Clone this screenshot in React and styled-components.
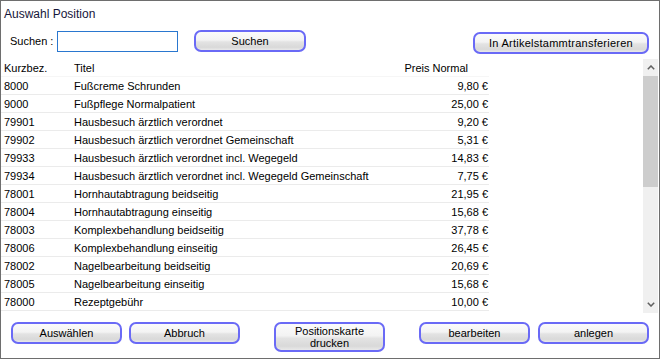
import React from "react";
import styled, { createGlobalStyle } from "styled-components";

const GlobalStyle = createGlobalStyle`
  html, body { margin: 0; padding: 0; background: #fff; }
  body { font-family: "Liberation Sans", Arial, sans-serif; }
`;

const Window = styled.div`
  width: 660px;
  height: 359px;
  box-sizing: border-box;
  border: 1px solid #6e6e6e;
  background: #fff;
  display: flex;
  flex-direction: column;
  font-family: "Liberation Sans", Arial, sans-serif;
  font-size: 11px;
  color: #000;
  overflow: hidden;
`;

const Title = styled.div`
  padding: 6px 0 0 3px;
  height: 14px;
  line-height: 14px;
  font-size: 12px;
  color: #16163a;
  margin-bottom: 9px;
`;

const SearchRow = styled.div`
  display: flex;
  align-items: flex-start;
  height: 24px;
  padding: 0 10px 0 9px;
`;

const Label = styled.label`
  width: 47px;
  height: 21px;
  line-height: 21px;
  margin-top: 1px;
  white-space: nowrap;
`;

const SearchInput = styled.input`
  width: 121px;
  height: 21px;
  box-sizing: border-box;
  border: 1px solid #2a77cf;
  margin: 1px 0 0 0;
  padding: 0 3px;
  font: inherit;
  outline: none;
  background: #fff;
`;

const Button = styled.button`
  width: ${(p) => p.$w || 111}px;
  height: ${(p) => p.$h || 22}px;
  margin: ${(p) => p.$mt || 0}px 0 0 ${(p) => (p.$ml === "auto" ? "auto" : `${p.$ml || 0}px`)};
  box-sizing: border-box;
  border: 2px solid #6a6af6;
  border-radius: 7px;
  padding: 0;
  background: linear-gradient(
    #fbfbfb 0%,
    #f3f3f3 45%,
    #e3e3e3 55%,
    #d9d9d9 85%,
    #e9e9e9 100%
  );
  font-family: "Liberation Sans", Arial, sans-serif;
  font-size: 11px;
  line-height: ${(p) => (p.$h ? "12px" : "18px")};
  color: #000;
  text-align: center;
  letter-spacing: ${(p) => p.$ls || 0}px;
  cursor: default;
`;

const List = styled.div`
  display: flex;
  height: 254px;
  margin-top: 5px;
`;

const Table = styled.div`
  flex: 1;
  display: flex;
  flex-direction: column;
`;

const Row = styled.div`
  width: 488px;
  height: 18px;
  box-sizing: border-box;
  display: grid;
  grid-template-columns: 70px 1fr auto;
  align-items: center;
  padding: 0 1px 0 3px;
  border-bottom: 1px solid ${(p) => (p.$header ? "#f6f6f6" : "#ebebeb")};
  white-space: nowrap;
`;

const Price = styled.span`
  text-align: right;
  padding-right: ${(p) => (p.$header ? 20 : 0)}px;
`;

const Scrollbar = styled.div`
  width: 15px;
  margin-right: 1px;
  display: flex;
  flex-direction: column;
  background: #f0f0f0;
`;

const ArrowBox = styled.div`
  height: 17px;
  display: flex;
  align-items: center;
  justify-content: center;
`;

const Thumb = styled.div`
  height: 111px;
  background: #cdcdcd;
`;

const Track = styled.div`
  flex: 1;
`;

const ButtonBar = styled.div`
  flex: 1;
  display: flex;
  justify-content: space-between;
  align-items: flex-start;
  padding: 9px 10px 0 10px;
`;

const Group = styled.div`
  display: flex;
  gap: ${(p) => p.$gap}px;
`;

const rows = [
  ["8000", "Fußcreme Schrunden", "9,80 €"],
  ["9000", "Fußpflege Normalpatient", "25,00 €"],
  ["79901", "Hausbesuch ärztlich verordnet", "9,20 €"],
  ["79902", "Hausbesuch ärztlich verordnet Gemeinschaft", "5,31 €"],
  ["79933", "Hausbesuch ärztlich verordnet incl. Wegegeld", "14,83 €"],
  ["79934", "Hausbesuch ärztlich verordnet incl. Wegegeld Gemeinschaft", "7,75 €"],
  ["78001", "Hornhautabtragung beidseitig", "21,95 €"],
  ["78004", "Hornhautabtragung einseitig", "15,68 €"],
  ["78003", "Komplexbehandlung beidseitig", "37,78 €"],
  ["78006", "Komplexbehandlung einseitig", "26,45 €"],
  ["78002", "Nagelbearbeitung beidseitig", "20,69 €"],
  ["78005", "Nagelbearbeitung einseitig", "15,68 €"],
  ["78000", "Rezeptgebühr", "10,00 €"],
];

const Chevron = ({ up }) => (
  <svg width="8" height="5" viewBox="0 0 8 5">
    <polyline
      points={up ? "0.8,4.3 4,1 7.2,4.3" : "0.8,0.7 4,4 7.2,0.7"}
      fill="none"
      stroke="#606060"
      strokeWidth="1.5"
    />
  </svg>
);

export default function App() {
  return (
    <>
      <GlobalStyle />
      <Window>
        <Title>Auswahl Position</Title>
        <SearchRow>
          <Label>Suchen :</Label>
          <SearchInput type="text" />
          <Button $w={112} $ml={16}>Suchen</Button>
          <Button $w={176} $ml="auto" $mt={2} $ls={0.25}>
            In Artikelstammtransferieren
          </Button>
        </SearchRow>
        <List>
          <Table>
            <Row $header>
              <span>Kurzbez.</span>
              <span>Titel</span>
              <Price $header>Preis Normal</Price>
            </Row>
            {rows.map(([id, title, price]) => (
              <Row key={id}>
                <span>{id}</span>
                <span>{title}</span>
                <Price>{price}</Price>
              </Row>
            ))}
          </Table>
          <Scrollbar>
            <ArrowBox>
              <Chevron up />
            </ArrowBox>
            <Thumb />
            <Track />
            <ArrowBox>
              <Chevron />
            </ArrowBox>
          </Scrollbar>
        </List>
        <ButtonBar>
          <Group $gap={7}>
            <Button>Auswählen</Button>
            <Button>Abbruch</Button>
          </Group>
          <Button $h={30}>
            Positionskarte
            <br />
            drucken
          </Button>
          <Group $gap={8}>
            <Button>bearbeiten</Button>
            <Button>anlegen</Button>
          </Group>
        </ButtonBar>
      </Window>
    </>
  );
}
